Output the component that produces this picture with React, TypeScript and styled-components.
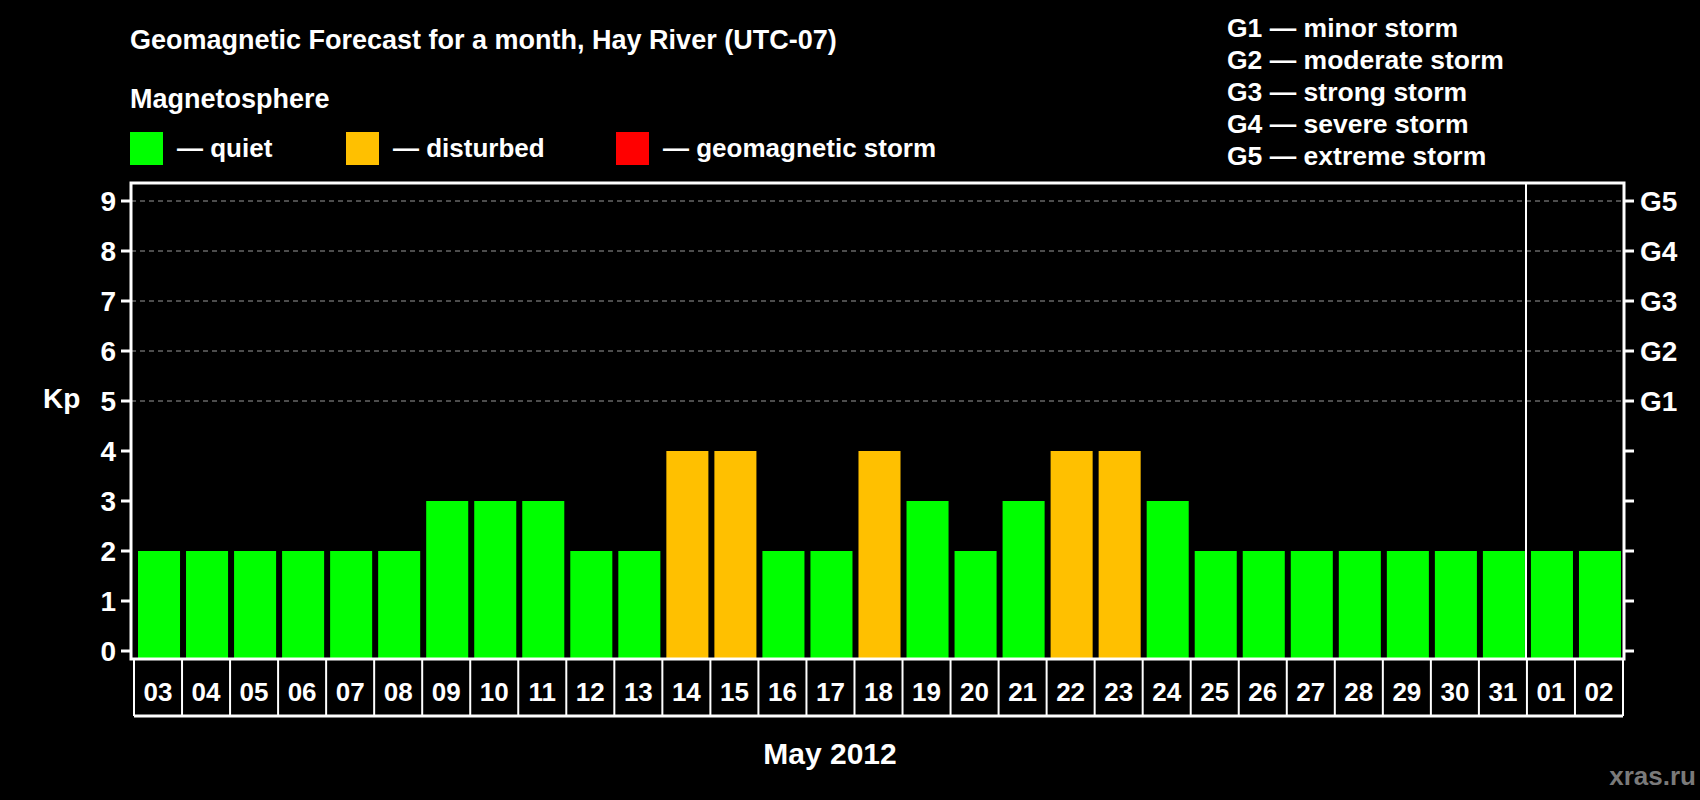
import React from "react";
import styled, { createGlobalStyle } from "styled-components";

const Global = createGlobalStyle`
  html, body { margin: 0; padding: 0; background: #000; }
  body { width: 1700px; height: 800px; overflow: hidden; font-family: "Liberation Sans", Arial, sans-serif; }
`;

const Page = styled.div`
  width: 1700px;
  height: 800px;
  background: #000;
  color: #fff;
  display: flex;
  flex-direction: column;
  font-weight: bold;
`;

const Header = styled.div`
  height: 175px;
  display: flex;
  padding-left: 130px;
`;

const LeftHead = styled.div`
  display: flex;
  flex-direction: column;
  width: 1097px;
`;

const Title = styled.div`
  font-size: 27px;
  margin-top: 24px;
  line-height: 32px;
  white-space: nowrap;
`;

const Sub = styled.div`
  font-size: 27px;
  margin-top: 28px;
  line-height: 30px;
`;

const Legend = styled.div`
  display: flex;
  margin-top: 18px;
`;

const LegendItem = styled.div<{ $w: number }>`
  display: flex;
  align-items: center;
  width: ${(p) => p.$w}px;
  font-size: 26px;
  gap: 14px;
  white-space: nowrap;
`;

const Swatch = styled.div<{ $c: string }>`
  width: 33px;
  height: 33px;
  background: ${(p) => p.$c};
`;

const GList = styled.div`
  display: flex;
  flex-direction: column;
  margin-top: 12px;
  font-size: 26.5px;
  line-height: 32px;
  white-space: nowrap;
`;

const Chart = styled.svg`
  display: block;
  font-family: "Liberation Sans", Arial, sans-serif;
  font-weight: bold;
`;

const days = ["03","04","05","06","07","08","09","10","11","12","13","14","15","16","17","18","19","20","21","22","23","24","25","26","27","28","29","30","31","01","02"];
const kp = [2,2,2,2,2,2,3,3,3,2,2,4,4,2,2,4,3,2,3,4,4,3,2,2,2,2,2,2,2,2,2];

const OY = 175;
const y = (v: number) => 651 - OY - v * 50;
const X0 = 134;
const SW = (1623 - 134) / 31;
const PL = 131, PR = 1624, PT = 183 - OY, PB = 659 - OY;

export default function App() {
  return (
    <Page>
      <Global />
      <Header>
        <LeftHead>
          <Title>Geomagnetic Forecast for a month, Hay River (UTC-07)</Title>
          <Sub>Magnetosphere</Sub>
          <Legend>
            <LegendItem $w={216}><Swatch $c="#00ff00" />— quiet</LegendItem>
            <LegendItem $w={270}><Swatch $c="#ffc000" />— disturbed</LegendItem>
            <LegendItem $w={340}><Swatch $c="#ff0000" />— geomagnetic storm</LegendItem>
          </Legend>
        </LeftHead>
        <GList>
          <div>G1 — minor storm</div>
          <div>G2 — moderate storm</div>
          <div>G3 — strong storm</div>
          <div>G4 — severe storm</div>
          <div>G5 — extreme storm</div>
        </GList>
      </Header>
      <Chart width={1700} height={625} viewBox="0 0 1700 625">
        {[5, 6, 7, 8, 9].map((v) => (
          <line key={v} x1={PL} x2={PR} y1={y(v)} y2={y(v)} stroke="#999" strokeWidth={1} strokeDasharray="5 4" />
        ))}
        {kp.map((v, i) => (
          <rect key={i} x={X0 + i * SW + 4} y={y(v)} width={SW - 6} height={PB - y(v)} fill={v >= 4 ? "#ffc000" : "#00ff00"} />
        ))}
        <line x1={1526} x2={1526} y1={PT} y2={PB} stroke="#fff" strokeWidth={2} />
        <rect x={PL} y={PT} width={PR - PL} height={PB - PT} fill="none" stroke="#fff" strokeWidth={3} />
        {Array.from({ length: 10 }, (_, v) => (
          <g key={v}>
            <line x1={PL - 10} x2={PL} y1={y(v)} y2={y(v)} stroke="#fff" strokeWidth={3} />
            <line x1={PR} x2={PR + 10} y1={y(v)} y2={y(v)} stroke="#fff" strokeWidth={3} />
            <text x={116} y={y(v) + 10} fontSize={28} fill="#fff" textAnchor="end">{v}</text>
          </g>
        ))}
        {["G1", "G2", "G3", "G4", "G5"].map((g, i) => (
          <text key={g} x={1640} y={y(i + 5) + 10} fontSize={28} fill="#fff">{g}</text>
        ))}
        <text x={43} y={408 - OY} fontSize={28} fill="#fff">Kp</text>
        <line x1={X0} x2={1623} y1={716 - OY} y2={716 - OY} stroke="#fff" strokeWidth={3} />
        {Array.from({ length: 32 }, (_, i) => (
          <line key={i} x1={X0 + i * SW} x2={X0 + i * SW} y1={PB} y2={716 - OY} stroke="#fff" strokeWidth={2} />
        ))}
        {days.map((d, i) => (
          <text key={i} x={X0 + i * SW + SW / 2} y={701 - OY} fontSize={26} fill="#fff" textAnchor="middle">{d}</text>
        ))}
        <text x={830} y={764 - OY} fontSize={30} fill="#fff" textAnchor="middle">May 2012</text>
        <text x={1696} y={785 - OY} fontSize={26} fill="#7a7a7a" textAnchor="end">xras.ru</text>
      </Chart>
    </Page>
  );
}
